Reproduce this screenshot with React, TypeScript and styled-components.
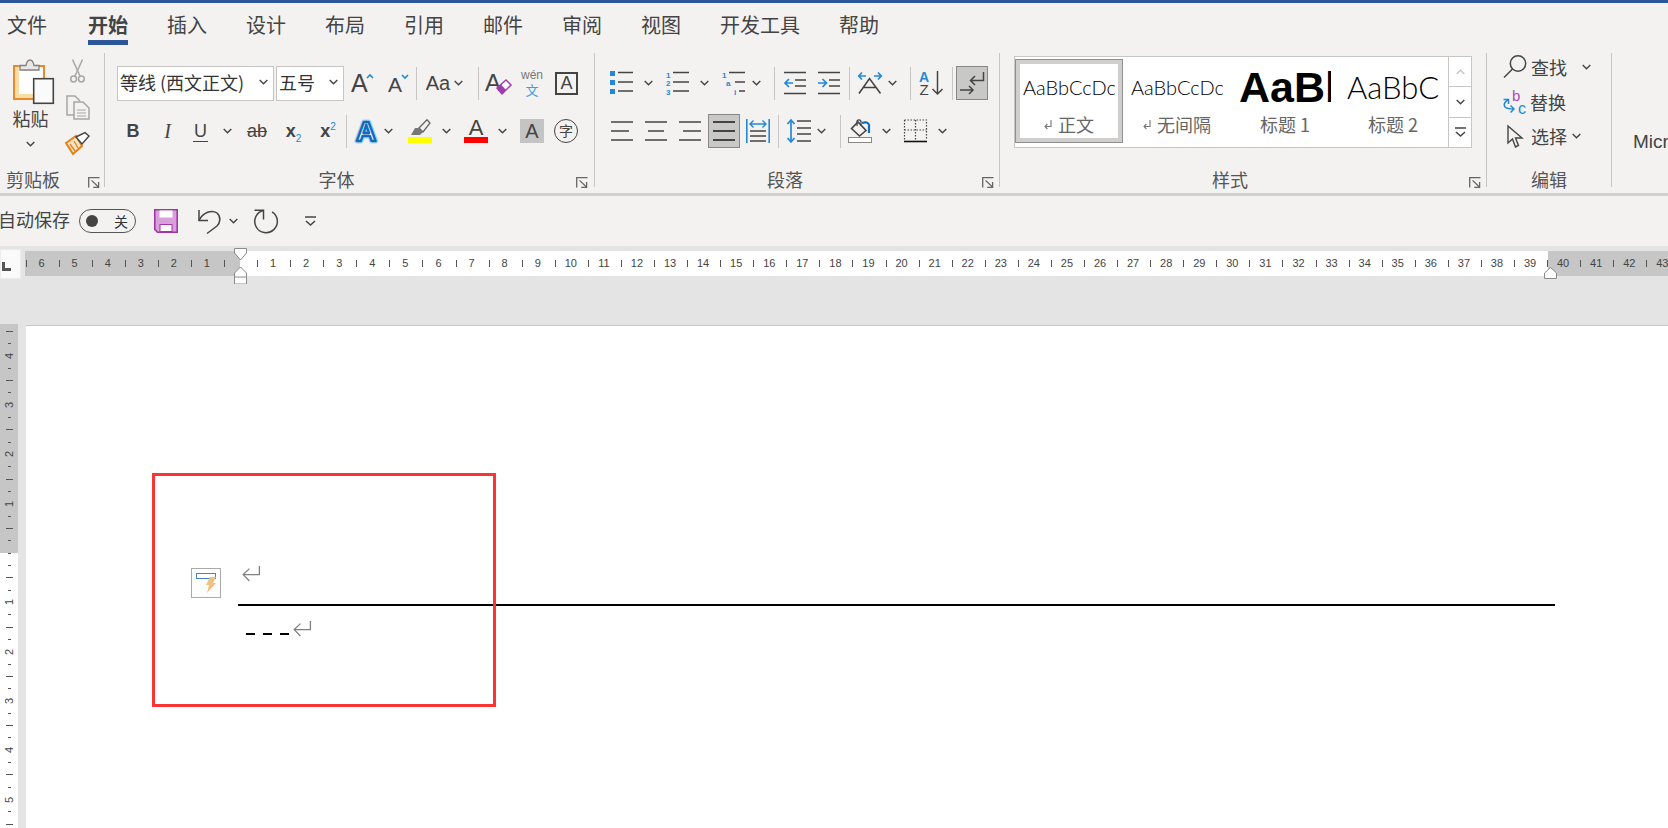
import React from 'react'
import styled, { createGlobalStyle } from 'styled-components'

const DARK = '#444444'
const BLUE = '#2389d7'
const LATIN = '"Liberation Sans", "Noto Sans CJK SC", sans-serif'
const THIN = 'Lato, "Liberation Sans", sans-serif'

const GlobalStyle = createGlobalStyle`
    html, body {
        margin: 0;
        height: 100%;
        overflow: hidden;
    }
    body {
        font-family: "Noto Sans CJK SC", sans-serif;
        color: ${DARK};
        background: #f3f2f1;
    }
    #root {
        height: 100%;
    }
`

const Window = styled.div`
    display: flex;
    flex-direction: column;
    height: 828px;
    border-top: 3px solid #2b579a;
    box-sizing: border-box;
    overflow: hidden;
`

/* tabs */

const TabBar = styled.nav`
    display: flex;
    gap: 39px;
    height: 43px;
    padding-left: 7px;
    flex: none;
`

const Tab = styled.div<{ $active?: boolean }>`
    box-sizing: border-box;
    height: 42px;
    padding-top: 11px;
    font-size: 20px;
    line-height: 22px;
    white-space: nowrap;
    font-weight: ${p => (p.$active ? 700 : 400)};
    border-bottom: 5px solid ${p => (p.$active ? '#2b579a' : 'transparent')};
    &:first-child {
        margin-right: 2px;
    }
`

/* ribbon */

const Ribbon = styled.div`
    display: flex;
    flex: none;
    height: 150px;
    box-sizing: border-box;
    padding: 7px 0 6px;
    border-bottom: 3px solid #d2d0ce;
    overflow: hidden;
`

const Group = styled.section<{ $w: number }>`
    display: flex;
    flex-direction: column;
    flex: none;
    box-sizing: border-box;
    width: ${p => p.$w}px;
    height: 134px;
    border-right: 1px solid #c8c6c4;
`

const RowStack = styled.div`
    display: flex;
    flex-direction: column;
    gap: 12px;
    padding-top: 12px;
`

const Row = styled.div`
    display: flex;
    align-items: center;
    height: 36px;
`

const Footer = styled.div`
    display: flex;
    align-items: center;
    height: 20px;
    margin-top: auto;
    margin-bottom: -2px;
`

const GroupLabel = styled.div<{ $pad?: number }>`
    flex: 1;
    padding-right: ${p => p.$pad ?? 0}px;
    text-align: center;
    font-size: 18px;
    line-height: 20px;
    color: #555;
    white-space: nowrap;
`

const LauncherSlot = styled.div<{ $right: number }>`
    flex: none;
    margin: 6px ${p => p.$right}px 0 0;
    display: flex;
`

const Slot = styled.div<{ $w: number; $ml?: number }>`
    display: flex;
    align-items: center;
    justify-content: center;
    flex: none;
    width: ${p => p.$w}px;
    margin-left: ${p => p.$ml ?? 0}px;
`

const Sep = styled.div<{ $ml: number }>`
    flex: none;
    width: 1px;
    height: 33px;
    margin-left: ${p => p.$ml}px;
    background: #c8c6c4;
`

const Pressed = styled(Slot)`
    height: 34px;
    box-sizing: border-box;
    background: #c8c8c6;
    border: 1px solid #8a8886;
`

/* clipboard group */

const ClipBody = styled.div`
    display: flex;
    padding: 6px 0 0 11px;
`

const PasteCol = styled.div`
    display: flex;
    flex-direction: column;
    align-items: center;
    width: 39px;
    & > svg:first-child {
        align-self: flex-start;
        margin-left: 2px;
    }
`

const PasteLabel = styled.div`
    font-size: 18px;
    line-height: 20px;
    margin-top: 4px;
    margin-bottom: 13px;
    white-space: nowrap;
`

const ClipTools = styled.div`
    display: flex;
    flex-direction: column;
    align-items: center;
    gap: 12px;
    width: 25px;
    margin-left: 15px;
`

/* font group */

const ComboRow = styled(Row)`
    padding-left: 12px;
`

const Combo = styled.div<{ $w: number; $ml?: number }>`
    display: flex;
    align-items: center;
    justify-content: space-between;
    box-sizing: border-box;
    width: ${p => p.$w}px;
    height: 35px;
    margin-left: ${p => p.$ml ?? 0}px;
    padding: 0 5px 2px 2px;
    background: #fff;
    border: 1px solid #c8c6c4;
    font-size: 18px;
    color: #333;
    white-space: nowrap;
`

const AaText = styled.span`
    font-family: ${LATIN};
    font-size: 20px;
    line-height: 24px;
`

const Wen = styled.div`
    display: flex;
    flex-direction: column;
    align-items: center;
    font-family: ${LATIN};
    font-size: 12px;
    line-height: 11px;
    color: #777;
    & > b {
        font-family: "Noto Sans CJK SC", sans-serif;
        font-weight: 400;
        font-size: 13px;
        line-height: 14px;
        color: #3f9fdf;
        margin-top: 2px;
    }
`

const BoxedA = styled.div`
    box-sizing: border-box;
    width: 23px;
    height: 23px;
    border: 2px solid ${DARK};
    font-family: ${LATIN};
    font-size: 18px;
    line-height: 19px;
    text-align: center;
`

const BoldLetter = styled.span`
    font-family: ${LATIN};
    font-weight: 700;
    font-size: 18px;
    line-height: 22px;
`

const ItalicLetter = styled.span`
    font-family: "Liberation Serif", serif;
    font-style: italic;
    font-size: 20px;
    line-height: 22px;
`

const UnderLetter = styled.span`
    font-family: ${LATIN};
    font-size: 18px;
    line-height: 20px;
    padding: 0 1px;
    border-bottom: 1.5px solid ${DARK};
`

const StrikeLetters = styled.span`
    font-family: ${LATIN};
    font-size: 18px;
    line-height: 22px;
    text-decoration: line-through;
`

const ScriptLetter = styled.span`
    font-family: ${LATIN};
    font-weight: 700;
    font-size: 18px;
    line-height: 22px;
    white-space: nowrap;
    & small {
        font-size: 10px;
        font-weight: 400;
        color: ${BLUE};
    }
    & > sub,
    & > sup {
        line-height: 0;
    }
`

const ShadedA = styled.div`
    width: 24px;
    height: 24px;
    background: #c4c4c4;
    font-family: ${LATIN};
    font-size: 20px;
    line-height: 24px;
    text-align: center;
`

const CircledChar = styled.div`
    box-sizing: border-box;
    width: 24px;
    height: 24px;
    border: 1.5px solid ${DARK};
    border-radius: 50%;
    font-size: 14px;
    line-height: 20px;
    text-align: center;
`

/* styles gallery */

const Gallery = styled.div`
    display: flex;
    box-sizing: border-box;
    width: 458px;
    height: 92px;
    margin: 3px 0 0 14px;
    background: #fff;
    border: 1px solid #c8c6c4;
`

const StyleItems = styled.div`
    display: flex;
    flex: 1;
    padding-top: 2px;
`

const StyleItem = styled.div<{ $selected?: boolean }>`
    display: flex;
    flex-direction: column;
    align-items: center;
    box-sizing: border-box;
    width: 108px;
    height: 84px;
    ${p =>
        p.$selected
            ? `
        border: 1px solid #8f8f8f;
        box-shadow: inset 0 0 0 4px #d0cfcd;
    `
            : ''}
`

const Sample = styled.div<{ $size: number; $bold?: boolean; $selected?: boolean }>`
    width: 92px;
    height: 56px;
    margin-top: ${p => (p.$selected ? -1 : 0)}px;
    overflow: hidden;
    font-family: ${p => (p.$bold ? LATIN : THIN)};
    font-size: ${p => p.$size}px;
    font-weight: ${p => (p.$bold ? 700 : 300)};
    line-height: 56px;
    color: #000;
    white-space: nowrap;
`

const StyleName = styled.div`
    display: flex;
    align-items: center;
    gap: 6px;
    font-size: 18px;
    line-height: 18px;
    color: #666;
    white-space: nowrap;
`

const ScrollCol = styled.div`
    display: flex;
    flex-direction: column;
    flex: none;
    width: 22px;
    border-left: 1px solid #c8c6c4;
`

const ScrollBtn = styled.div<{ $bordered?: boolean }>`
    display: flex;
    align-items: center;
    justify-content: center;
    flex: 1;
    background: #fff;
    border-top: ${p => (p.$bordered ? '1px solid #c8c6c4' : 'none')};
`

/* editing group */

const EditBody = styled.div`
    display: flex;
    flex-direction: column;
    gap: 4.5px;
    margin-top: -1px;
    padding-left: 16px;
`

const EditRow = styled.div`
    display: flex;
    align-items: center;
    height: 30px;
    font-size: 18px;
    white-space: nowrap;
`

const EditText = styled.span<{ $mr: number }>`
    margin: 0 ${p => p.$mr}px 0 4px;
`

const Overflow = styled.div`
    flex: 1;
    padding: 78px 0 0 21px;
    font-family: ${LATIN};
    font-size: 19px;
    line-height: 22px;
    white-space: nowrap;
    overflow: hidden;
`

/* quick access toolbar */

const QuickBar = styled.div`
    display: flex;
    align-items: center;
    flex: none;
    height: 50px;
`

const AutoSave = styled.span`
    font-size: 18px;
    line-height: 24px;
    margin: 0 0 4px -2px;
    white-space: nowrap;
`

const Toggle = styled.div`
    display: flex;
    align-items: center;
    justify-content: space-between;
    box-sizing: border-box;
    width: 57px;
    height: 24px;
    margin-left: 9px;
    padding: 0 7px 0 6px;
    border: 1px solid #555;
    border-radius: 12px;
    font-size: 14px;
    color: #333;
`

const Knob = styled.span`
    width: 12px;
    height: 12px;
    border-radius: 50%;
    background: ${DARK};
`

/* rulers */

const RulerZone = styled.div`
    position: relative;
    display: flex;
    align-items: flex-start;
    flex: none;
    height: 78px;
    padding-top: 3px;
    box-sizing: border-box;
    background: #e4e4e4;
`

const TabStopCorner = styled.div`
    display: flex;
    align-items: flex-end;
    flex: none;
    box-sizing: border-box;
    width: 21px;
    height: 30px;
    padding: 0 0 6px 1px;
    background: #fafafa;
    border: 1px solid #ececec;
`

const HRuler = styled.div`
    display: flex;
    flex: 1;
    height: 25px;
    margin: 2px 0 0 4px;
    overflow: hidden;
    background: linear-gradient(
        to right,
        #c6c6c6 215px,
        #fff 215px,
        #fff 1523px,
        #c6c6c6 1523px
    );
`

const HCell = styled.div`
    position: relative;
    flex: none;
    width: 33.08px;
    font-family: ${LATIN};
    font-size: 11px;
    line-height: 25px;
    text-align: center;
    color: #444;
    &::before {
        content: "";
        position: absolute;
        left: 0.5px;
        top: 9px;
        width: 1px;
        height: 7px;
        background: #555;
    }
`

const Marker = styled.svg<{ $left: number; $top: number }>`
    position: absolute;
    left: ${p => p.$left}px;
    top: ${p => p.$top}px;
`

const DocArea = styled.div`
    display: flex;
    flex: 1;
    min-height: 0;
    background: #e4e4e4;
`

const VRuler = styled.div`
    display: flex;
    flex-direction: column;
    flex: none;
    width: 18px;
    margin-right: 8px;
    padding-top: 1px;
    box-sizing: border-box;
    overflow: hidden;
    background: linear-gradient(to bottom, #c6c6c6 229px, #fff 229px);
`

const VCell = styled.div`
    display: flex;
    align-items: center;
    justify-content: center;
    flex: none;
    height: 12.33px;
    font-family: ${LATIN};
    font-size: 11px;
    color: #444;
    & > span {
        transform: rotate(-90deg);
    }
`

const VTick = styled.i<{ $long?: boolean }>`
    display: block;
    width: ${p => (p.$long ? 7 : 3)}px;
    height: 1px;
    background: #555;
`

/* page */

const Page = styled.main`
    position: relative;
    flex: 1;
    margin-top: 1px;
    padding: 240px 0 0 212px;
    background: #fff;
    border-top: 1px solid #c6c6c6;
`

const Paragraph = styled.div`
    display: flex;
    align-items: flex-end;
    height: 16px;
    padding-left: 4px;
`

const RuleLine = styled.div`
    width: 1317px;
    height: 2px;
    margin: 22px 0 15px;
    background: #000;
`

const Dashes = styled.div`
    display: flex;
    gap: 8px;
    margin: 0 4px 2px 4px;
`

const Dash = styled.span`
    width: 9px;
    height: 2px;
    background: #000;
`

const SmartTag = styled.div`
    position: absolute;
    left: 165px;
    top: 242px;
    box-sizing: border-box;
    width: 30px;
    height: 30px;
    background: #fdfdfd;
    border: 1px solid #aaa;
`

const RedBox = styled.div`
    position: absolute;
    left: 126px;
    top: 147px;
    box-sizing: border-box;
    width: 344px;
    height: 234px;
    border: 3px solid #fb3535;
    pointer-events: none;
`

/* icons */

const Svg = styled.svg`
    display: block;
    flex: none;
    overflow: visible;
`

const Chevron = ({ ml = 0, color = DARK, up }: { ml?: number; color?: string; up?: boolean }) => (
    <Slot $w={9} $ml={ml}>
        <Svg width="9" height="6" fill="none" stroke={color} strokeWidth="1.4">
            <path d={up ? 'M0.7 5 L4.5 1.2 L8.3 5' : 'M0.7 1 L4.5 4.8 L8.3 1'} />
        </Svg>
    </Slot>
)

const ReturnMark = () => (
    <Svg width="18" height="16" fill="none" stroke="#808080" strokeWidth="1.3">
        <path d="M17.4 0 V8.6 H1.2" />
        <path d="M7.4 2.6 L1.2 8.6 L7.4 15" />
    </Svg>
)

const SmallReturn = () => (
    <Svg width="8" height="11" fill="none" stroke="#777" strokeWidth="1.1">
        <path d="M7 1 V7.5 H1.2" />
        <path d="M3.4 5 L1 7.5 L3.4 10" />
    </Svg>
)

const Launcher = () => (
    <Svg width="12" height="11" fill="none" stroke="#666" strokeWidth="1.3">
        <path d="M0.7 10.5 V0.7 H11.5" />
        <path d="M3.6 3.4 L10.4 10" />
        <path d="M10.6 5 V10.4 H5.2" />
    </Svg>
)

const PasteIcon = () => (
    <Svg width="41" height="45">
        <rect x="1" y="7" width="30" height="33" fill="#fff" stroke="#e68a2e" strokeWidth="2" />
        <path d="M2 8 H6 V35 H30 V39 H2 Z" fill="#fcdca6" />
        <path d="M7 11 V6.5 H13 Q14 1 17 1 Q20 1 21 6.5 H26 V11 Z" fill="#e9e8e7" stroke="#808080" strokeWidth="1.3" />
        <rect x="20.7" y="19.7" width="19.6" height="24.6" fill="#fafafa" stroke={DARK} strokeWidth="1.6" />
    </Svg>
)

const ScissorsIcon = () => (
    <Svg width="15" height="24" fill="none" stroke="#a6a6a6" strokeWidth="1.5">
        <path d="M2.5 0.5 L10 17" />
        <path d="M12.5 0.5 L5 17" />
        <circle cx="3.6" cy="20" r="2.9" />
        <circle cx="11.4" cy="20" r="2.9" />
    </Svg>
)

const CopyIcon = () => (
    <Svg width="24" height="25" fill="none" stroke="#a6a6a6" strokeWidth="1.5">
        <path d="M8 20 H1 V1 H9 L14 6" />
        <path d="M8 7 H17 L23 13 V24 H8 Z" fill="#f3f2f1" />
        <path d="M11 15 H20 M11 18 H20 M11 21 H20" strokeWidth="1.2" />
    </Svg>
)

const PainterIcon = () => (
    <Svg width="25" height="23">
        <path d="M1 11 L11 4 L17 14 L8 22 Z" fill="#fbe3c4" stroke="#e5811d" strokeWidth="2" />
        <path d="M5 12 L10 19 M9 9 L13 16" stroke="#e5811d" strokeWidth="1.3" />
        <path d="M11 5 L20 0.6 L24 4 L17 12 Z" fill="#fff" stroke={DARK} strokeWidth="1.4" />
    </Svg>
)

const GrowIcon = ({ big, up }: { big: boolean; up: boolean }) => (
    <Svg width={big ? 23 : 21} height="20">
        <text x="0" y={19} fontFamily="Liberation Sans" fontSize={big ? 25 : 21} fill={DARK}>A</text>
        <path d={up ? 'M16 5 L19 2 L22 5' : 'M14 2 L17 5 L20 2'} fill="none" stroke={BLUE} strokeWidth="1.6" />
    </Svg>
)

const ClearIcon = () => (
    <Svg width="25" height="24">
        <text x="-1" y="20" fontFamily="Liberation Sans" fontSize="24" fill={DARK}>A</text>
        <path d="M11 17 L20 9 L25 14 L16 23 Z" fill="#fff" stroke="#a03cb0" strokeWidth="1.5" />
        <path d="M11 17 L15 13.5 L20 19 L16 23 Z" fill="#a03cb0" />
    </Svg>
)

const TextEffectIcon = () => (
    <Svg width="24" height="24">
        <text x="12" y="22" textAnchor="middle" fontFamily="Liberation Sans" fontWeight="700" fontSize="28" fill="#fff" stroke="#a9d3f2" strokeWidth="5" strokeLinejoin="round">A</text>
        <text x="12" y="22" textAnchor="middle" fontFamily="Liberation Sans" fontWeight="700" fontSize="28" fill="#fff" stroke="#0f6cbd" strokeWidth="2.4" strokeLinejoin="round">A</text>
    </Svg>
)

const HighlightIcon = () => (
    <Svg width="24" height="24">
        <rect x="0" y="18" width="24" height="6" fill="#ffff00" />
        <path d="M11 9 L19 0.7 L22 4 L15 13 Z" fill="#f3f2f1" stroke="#666" strokeWidth="1.3" />
        <path d="M3 16 L7 9 L11 9 L15 13 L12 16 Z" fill="#777" />
    </Svg>
)

const FontColorIcon = () => (
    <Svg width="24" height="24">
        <rect x="0" y="18" width="24" height="6" fill="#ff0000" />
        <text x="12" y="16" textAnchor="middle" fontFamily="Liberation Sans" fontSize="22" fill={DARK}>A</text>
    </Svg>
)

const BulletsIcon = () => (
    <Svg width="23" height="24">
        <g fill={BLUE}>
            <rect x="0" y="0" width="5" height="5" />
            <rect x="0" y="9" width="5" height="5" />
            <rect x="0" y="18" width="5" height="5" />
        </g>
        <path d="M8 1.5 H23 M8 11 H23 M8 20 H23" stroke={DARK} strokeWidth="1.4" />
    </Svg>
)

const NumberedIcon = () => (
    <Svg width="23" height="24">
        <g fill={BLUE} fontFamily="Liberation Sans" fontWeight="700" fontSize="8">
            <text x="0" y="7">1</text>
            <text x="0" y="15">2</text>
            <text x="0" y="24">3</text>
        </g>
        <path d="M7 1.5 H23 M7 11 H23 M7 20 H23" stroke={DARK} strokeWidth="1.4" />
    </Svg>
)

const MultilevelIcon = () => (
    <Svg width="23" height="24">
        <g fill={BLUE} fontFamily="Liberation Sans" fontWeight="700" fontSize="8">
            <text x="0" y="7">1</text>
            <text x="4" y="15">a</text>
            <text x="12" y="24">i</text>
        </g>
        <path d="M7 1.5 H23 M13 11 H23 M17 20 H23" stroke={DARK} strokeWidth="1.4" />
    </Svg>
)

const IndentIcon = ({ increase }: { increase?: boolean }) => (
    <Svg width="22" height="24" fill="none">
        <path d="M0 1.5 H22 M0 22.5 H22 M11 9 H22 M11 15 H22" stroke={DARK} strokeWidth="1.4" />
        <path
            d={increase ? 'M0 12 H8 M4.5 8 L8.5 12 L4.5 16' : 'M9 12 H1 M5 8 L1 12 L5 16'}
            stroke={BLUE}
            strokeWidth="1.7"
        />
    </Svg>
)

const TextDirIcon = () => (
    <Svg width="24" height="22" fill="none">
        <path d="M1 21.5 L11.5 6.5 L22.5 21.5 M5 15.5 H18.5" stroke={DARK} strokeWidth="1.6" />
        <path d="M0.7 4 H8 M4 0.5 L0.7 4 L4 7.5" stroke={BLUE} strokeWidth="1.7" />
        <path d="M23.3 4 H16 M20 0.5 L23.3 4 L20 7.5" stroke={BLUE} strokeWidth="1.7" />
    </Svg>
)

const SortIcon = () => (
    <Svg width="24" height="24" fill="none">
        <text x="0" y="10.5" fontFamily="Liberation Sans" fontWeight="700" fontSize="14" fill={BLUE}>A</text>
        <text x="0.5" y="24" fontFamily="Liberation Sans" fontSize="15" fill={DARK}>Z</text>
        <path d="M18.5 0 V23 M13.5 18 L18.5 23 L23.5 18" stroke={DARK} strokeWidth="1.5" />
    </Svg>
)

const MarksIcon = () => (
    <Svg width="24" height="22" fill="none" stroke={DARK} strokeWidth="1.5">
        <path d="M23.5 0 V8.5 H11 M15 4 L10.5 8.5 L15 13" />
        <path d="M0 18 H13 M9 14 L13 18 L9 22" />
    </Svg>
)

const AlignIcon = ({ d, heavy }: { d: string; heavy?: boolean }) => (
    <Svg width="22" height="20" fill="none" stroke={DARK} strokeWidth={heavy ? 1.8 : 1.4}>
        <path d={d} />
    </Svg>
)

const DistributeIcon = () => (
    <Svg width="24" height="24" fill="none">
        <path d="M0.8 0 V24 M23.2 0 V24" stroke={BLUE} strokeWidth="1.6" />
        <path d="M4 12 H20 M4 17 H20 M4 22 H20" stroke={DARK} strokeWidth="1.4" />
        <path d="M4 5 H20 M7.5 1.5 L4 5 L7.5 8.5 M16.5 1.5 L20 5 L16.5 8.5" stroke={BLUE} strokeWidth="1.4" />
    </Svg>
)

const SpacingIcon = () => (
    <Svg width="24" height="24" fill="none">
        <path d="M4 1 V23 M0.5 5 L4 1 L7.5 5 M0.5 19 L4 23 L7.5 19" stroke={BLUE} strokeWidth="1.7" />
        <path d="M10 2 H24 M10 9 H24 M10 15 H24 M10 22 H24" stroke={DARK} strokeWidth="1.4" />
    </Svg>
)

const ShadingIcon = () => (
    <Svg width="24" height="24" fill="none">
        <rect x="0.5" y="18.5" width="23" height="5" fill="#fff" stroke="#8a8886" />
        <path d="M3.5 9.5 L10 3 L18 11.5 L11.5 17 Z" stroke={DARK} strokeWidth="1.6" />
        <path d="M9 7 V2.5 Q9 0.8 11 0.8 Q13 0.8 13 3 V7" stroke={DARK} strokeWidth="1.2" />
        <path d="M14 4 Q20 2 21 6 L21 14" stroke="#0f6cbd" strokeWidth="2.2" />
    </Svg>
)

const BordersIcon = () => (
    <Svg width="23" height="24" fill="none">
        <path d="M0.5 1 H22.5 V21 M0.5 1 V21 M11.5 1 V21 M0.5 11 H22.5" stroke="#444" strokeWidth="1.2" strokeDasharray="1.5 1.5" />
        <path d="M0 22.5 H23" stroke="#111" strokeWidth="1.6" />
    </Svg>
)

const FindIcon = () => (
    <Svg width="24" height="24" fill="none" stroke={DARK} strokeWidth="1.5">
        <circle cx="15" cy="8.5" r="7.7" />
        <path d="M9.5 14 L1 22.5" />
    </Svg>
)

const ReplaceIcon = () => (
    <Svg width="23" height="24" fill="none">
        <text x="9" y="11" fontFamily="Liberation Sans" fontSize="15" fill="#b146c2">b</text>
        <text x="15" y="24" fontFamily="Liberation Sans" fontSize="16" fill={BLUE}>c</text>
        <path d="M5.5 9 L2 12.5 Q0.5 15 2 17 Q4 19 11 19 M7.5 15.5 L11 19 L7.5 22.5 M0.5 9.5 H5.5 V14" stroke={BLUE} strokeWidth="1.5" />
    </Svg>
)

const SelectIcon = () => (
    <Svg width="16" height="23" fill="#f3f2f1" stroke={DARK} strokeWidth="1.4">
        <path d="M1 1 L1 18 L5.5 14 L8.5 22 L11.5 20.5 L8.5 13 L15 13 Z" />
    </Svg>
)

const SaveIcon = () => (
    <Svg width="24" height="24">
        <path d="M0.8 0.8 H23.2 V23.2 H3.5 L0.8 20.5 Z" fill="#d9a0dc" stroke="#a335a8" strokeWidth="1.6" />
        <rect x="5.5" y="1.5" width="13" height="7" fill="#fff" />
        <rect x="6" y="15.5" width="12" height="7" fill="#fff" stroke="#a335a8" strokeWidth="1" />
    </Svg>
)

const UndoIcon = () => (
    <Svg width="23" height="25" fill="none" stroke={DARK} strokeWidth="1.5">
        <path d="M1 1 V11.5 H10" />
        <path d="M1 11.5 C5 3 14 0.5 19 4 C23.5 8 22 14 19 17 L9 24.5" />
    </Svg>
)

const RedoIcon = () => (
    <Svg width="25" height="25" fill="none" stroke={DARK} strokeWidth="1.5">
        <path d="M0.5 1.2 H9.5 V10.5" />
        <path d="M18 2.8 A11.3 11.3 0 1 1 9.5 1.4" />
    </Svg>
)

const CustomizeIcon = () => (
    <Svg width="11" height="10" fill="none" stroke={DARK} strokeWidth="1.5">
        <path d="M0 1 H11" />
        <path d="M1 5 L5.5 9 L10 5" />
    </Svg>
)

const FlashIcon = () => (
    <Svg width="28" height="28">
        <rect x="4.5" y="4.5" width="19" height="5" fill="none" stroke="#4a83bb" strokeWidth="1" />
        <path d="M18 8 L24 8 L21 14 L24 14 L15 24 L17 16 L14 16 Z" fill="#eec182" />
    </Svg>
)

const TabStopIcon = () => (
    <Svg width="10" height="10" fill="#555">
        <path d="M0 0 H3 V6 H9 V9 H0 Z" />
    </Svg>
)

const leftRuler = [6, 5, 4, 3, 2, 1]
const rightRuler = Array.from({ length: 43 }, (_, i) => i + 1)
const verticalMarks = Array.from({ length: 42 }, (_, i) => i - 18)

const renderVerticalMark = (i: number) => {
    if (i === 0) return <VTick />
    if (i % 4 === 0) return <span>{Math.abs(i / 4)}</span>
    if (i % 2 === 0) return <VTick $long />
    return <VTick />
}

export default function App() {
    return (
        <Window>
            <GlobalStyle />
            <TabBar>
                <Tab>文件</Tab>
                <Tab $active>开始</Tab>
                <Tab>插入</Tab>
                <Tab>设计</Tab>
                <Tab>布局</Tab>
                <Tab>引用</Tab>
                <Tab>邮件</Tab>
                <Tab>审阅</Tab>
                <Tab>视图</Tab>
                <Tab>开发工具</Tab>
                <Tab>帮助</Tab>
            </TabBar>

            <Ribbon>
                <Group $w={105}>
                    <ClipBody>
                        <PasteCol>
                            <PasteIcon />
                            <PasteLabel>粘贴</PasteLabel>
                            <Chevron />
                        </PasteCol>
                        <ClipTools>
                            <ScissorsIcon />
                            <CopyIcon />
                            <PainterIcon />
                        </ClipTools>
                    </ClipBody>
                    <Footer>
                        <GroupLabel $pad={22}>剪贴板</GroupLabel>
                        <LauncherSlot $right={4}>
                            <Launcher />
                        </LauncherSlot>
                    </Footer>
                </Group>

                <Group $w={490}>
                    <RowStack>
                        <ComboRow>
                            <Combo $w={157}>
                                等线 (西文正文)
                                <Chevron />
                            </Combo>
                            <Combo $w={68} $ml={2}>
                                五号
                                <Chevron />
                            </Combo>
                            <Slot $w={23} $ml={7}><GrowIcon big up /></Slot>
                            <Slot $w={21} $ml={14}><GrowIcon big={false} up={false} /></Slot>
                            <Sep $ml={7} />
                            <Slot $w={24} $ml={9}><AaText>Aa</AaText></Slot>
                            <Chevron ml={4} />
                            <Sep $ml={15} />
                            <Slot $w={25} $ml={7}><ClearIcon /></Slot>
                            <Slot $w={22} $ml={10}><Wen>wén<b>文</b></Wen></Slot>
                            <Slot $w={23} $ml={12}><BoxedA>A</BoxedA></Slot>
                        </ComboRow>
                        <Row>
                            <Slot $w={12} $ml={22}><BoldLetter>B</BoldLetter></Slot>
                            <Slot $w={9} $ml={24}><ItalicLetter>I</ItalicLetter></Slot>
                            <Slot $w={13} $ml={22}><UnderLetter>U</UnderLetter></Slot>
                            <Chevron ml={16} />
                            <Slot $w={24} $ml={13}><StrikeLetters>ab</StrikeLetters></Slot>
                            <Slot $w={17} $ml={16}><ScriptLetter>x<sub><small>2</small></sub></ScriptLetter></Slot>
                            <Slot $w={16} $ml={18}><ScriptLetter>x<sup><small>2</small></sup></ScriptLetter></Slot>
                            <Sep $ml={10} />
                            <Slot $w={24} $ml={7}><TextEffectIcon /></Slot>
                            <Chevron ml={6} />
                            <Slot $w={24} $ml={15}><HighlightIcon /></Slot>
                            <Chevron ml={10} />
                            <Slot $w={24} $ml={13}><FontColorIcon /></Slot>
                            <Chevron ml={10} />
                            <Slot $w={24} $ml={13}><ShadedA>A</ShadedA></Slot>
                            <Slot $w={24} $ml={10}><CircledChar>字</CircledChar></Slot>
                        </Row>
                    </RowStack>
                    <Footer>
                        <GroupLabel $pad={8}>字体</GroupLabel>
                        <LauncherSlot $right={6}>
                            <Launcher />
                        </LauncherSlot>
                    </Footer>
                </Group>

                <Group $w={405}>
                    <RowStack>
                        <Row>
                            <Slot $w={23} $ml={15}><BulletsIcon /></Slot>
                            <Chevron ml={11} />
                            <Slot $w={23} $ml={13}><NumberedIcon /></Slot>
                            <Chevron ml={11} />
                            <Slot $w={23} $ml={13}><MultilevelIcon /></Slot>
                            <Chevron ml={7} />
                            <Sep $ml={13} />
                            <Slot $w={22} $ml={9}><IndentIcon /></Slot>
                            <Slot $w={22} $ml={12}><IndentIcon increase /></Slot>
                            <Sep $ml={9} />
                            <Slot $w={24} $ml={8}><TextDirIcon /></Slot>
                            <Chevron ml={6} />
                            <Sep $ml={13} />
                            <Slot $w={24} $ml={8}><SortIcon /></Slot>
                            <Sep $ml={9} />
                            <Pressed $w={32} $ml={3}><MarksIcon /></Pressed>
                        </Row>
                        <Row>
                            <Slot $w={22} $ml={16}><AlignIcon d="M0 1 H22 M0 10 H18 M0 19 H22" /></Slot>
                            <Slot $w={22} $ml={12}><AlignIcon d="M0 1 H22 M3 10 H19 M0 19 H22" /></Slot>
                            <Slot $w={22} $ml={12}><AlignIcon d="M0 1 H22 M4 10 H22 M0 19 H22" /></Slot>
                            <Pressed $w={32} $ml={7}><AlignIcon heavy d="M0 1 H22 M0 10 H22 M0 19 H22" /></Pressed>
                            <Slot $w={24} $ml={6}><DistributeIcon /></Slot>
                            <Sep $ml={8} />
                            <Slot $w={24} $ml={8}><SpacingIcon /></Slot>
                            <Chevron ml={6} />
                            <Sep $ml={14} />
                            <Slot $w={24} $ml={7}><ShadingIcon /></Slot>
                            <Chevron ml={10} />
                            <Slot $w={23} $ml={13}><BordersIcon /></Slot>
                            <Chevron ml={11} />
                        </Row>
                    </RowStack>
                    <Footer>
                        <GroupLabel $pad={7}>段落</GroupLabel>
                        <LauncherSlot $right={5}>
                            <Launcher />
                        </LauncherSlot>
                    </Footer>
                </Group>

                <Group $w={487}>
                    <Gallery>
                        <StyleItems>
                            <StyleItem $selected>
                                <Sample $size={20} $selected>AaBbCcDc</Sample>
                                <StyleName><SmallReturn />正文</StyleName>
                            </StyleItem>
                            <StyleItem>
                                <Sample $size={20}>AaBbCcDc</Sample>
                                <StyleName><SmallReturn />无间隔</StyleName>
                            </StyleItem>
                            <StyleItem>
                                <Sample $size={43} $bold>AaBb</Sample>
                                <StyleName>标题 1</StyleName>
                            </StyleItem>
                            <StyleItem>
                                <Sample $size={31}>AaBbC</Sample>
                                <StyleName>标题 2</StyleName>
                            </StyleItem>
                        </StyleItems>
                        <ScrollCol>
                            <ScrollBtn><Chevron color="#c8c6c4" up /></ScrollBtn>
                            <ScrollBtn $bordered><Chevron /></ScrollBtn>
                            <ScrollBtn $bordered><CustomizeIcon /></ScrollBtn>
                        </ScrollCol>
                    </Gallery>
                    <Footer>
                        <GroupLabel $pad={9}>样式</GroupLabel>
                        <LauncherSlot $right={5}>
                            <Launcher />
                        </LauncherSlot>
                    </Footer>
                </Group>

                <Group $w={125}>
                    <EditBody>
                        <EditRow>
                            <FindIcon />
                            <EditText $mr={15}>查找</EditText>
                            <Chevron />
                        </EditRow>
                        <EditRow>
                            <ReplaceIcon />
                            <EditText $mr={0}>替换</EditText>
                        </EditRow>
                        <EditRow>
                            <Slot $w={24}><SelectIcon /></Slot>
                            <EditText $mr={5}>选择</EditText>
                            <Chevron />
                        </EditRow>
                    </EditBody>
                    <Footer>
                        <GroupLabel>编辑</GroupLabel>
                    </Footer>
                </Group>

                <Overflow>Micr</Overflow>
            </Ribbon>

            <QuickBar>
                <AutoSave>自动保存</AutoSave>
                <Toggle>
                    <Knob />
                    关
                </Toggle>
                <Slot $w={24} $ml={18}><SaveIcon /></Slot>
                <Slot $w={23} $ml={20}><UndoIcon /></Slot>
                <Chevron ml={8} />
                <Slot $w={25} $ml={16}><RedoIcon /></Slot>
                <Slot $w={11} $ml={26}><CustomizeIcon /></Slot>
            </QuickBar>

            <RulerZone>
                <TabStopCorner>
                    <TabStopIcon />
                </TabStopCorner>
                <HRuler>
                    {leftRuler.map(n => (
                        <HCell key={`l${n}`}>{n}</HCell>
                    ))}
                    <HCell />
                    {rightRuler.map(n => (
                        <HCell key={`r${n}`}>{n}</HCell>
                    ))}
                </HRuler>
                <Marker $left={234} $top={2} width="13" height="36" viewBox="0 0 13 36" fill="#fff" stroke="#8a8a8a">
                    <path d="M0.5 0.5 H12.5 V5 L6.5 12 L0.5 5 Z" />
                    <path d="M6.5 19 L12.5 25 V36 H0.5 V25 Z" />
                    <path d="M0.5 29 H12.5" />
                </Marker>
                <Marker $left={1544} $top={21} width="13" height="12" viewBox="0 0 13 12" fill="#fff" stroke="#8a8a8a">
                    <path d="M6.5 0.5 L12.5 6 V11.5 H0.5 V6 Z" />
                </Marker>
            </RulerZone>

            <DocArea>
                <VRuler>
                    {verticalMarks.map(i => (
                        <VCell key={i}>{renderVerticalMark(i)}</VCell>
                    ))}
                </VRuler>
                <Page>
                    <Paragraph>
                        <ReturnMark />
                    </Paragraph>
                    <RuleLine />
                    <Paragraph>
                        <Dashes>
                            <Dash />
                            <Dash />
                            <Dash />
                        </Dashes>
                        <ReturnMark />
                    </Paragraph>
                    <SmartTag>
                        <FlashIcon />
                    </SmartTag>
                    <RedBox />
                </Page>
            </DocArea>
        </Window>
    )
}
